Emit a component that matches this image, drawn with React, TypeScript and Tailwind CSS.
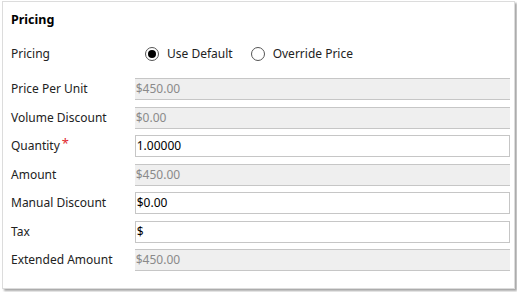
const rows: { label: string; value: string; readOnly: boolean; required?: boolean }[] = [
  { label: 'Price Per Unit', value: '$450.00', readOnly: true },
  { label: 'Volume Discount', value: '$0.00', readOnly: true },
  { label: 'Quantity', value: '1.00000', readOnly: false, required: true },
  { label: 'Amount', value: '$450.00', readOnly: true },
  { label: 'Manual Discount', value: '$0.00', readOnly: false },
  { label: 'Tax', value: '$', readOnly: false },
  { label: 'Extended Amount', value: '$450.00', readOnly: true },
];

function Radio({ checked, label }: { checked: boolean; label: string }) {
  return (
    <div className="flex items-center gap-[8px]">
      <span className="w-[14px] h-[14px] rounded-full border border-[#555] flex items-center justify-center bg-white">
        {checked && <span className="w-[8px] h-[8px] rounded-full bg-black" />}
      </span>
      <span>{label}</span>
    </div>
  );
}

export default function App() {
  return (
    <div className="w-[517px] h-[292px] bg-white pt-[1px] pl-[2px]" style={{ fontFamily: '"Noto Sans", "Open Sans", sans-serif' }}>
      <div className="w-[513px] h-[288px] border border-[#dcdcdc] bg-white shadow-[2px_2px_2px_rgba(0,0,0,0.35)] text-[12px] text-[#222] pl-[8px] pr-[4px]">
        <h2 className="font-bold text-[12.5px] text-black mt-[8px] h-[20px] leading-[20px]">Pricing</h2>

        <div className="flex items-center h-[24px] mt-[12px]">
          <div className="w-[124px]">Pricing</div>
          <div className="flex items-center gap-[18px] pl-[10px]">
            <Radio checked label="Use Default" />
            <Radio checked={false} label="Override Price" />
          </div>
        </div>

        <div className="flex flex-col mt-[9px]">
          {rows.map((r) => (
            <div key={r.label} className="flex items-center h-[28.5px]">
              <div className="w-[124px] flex items-start">
                {r.label}
                {r.required && <span className="text-[#e0282e] text-[13px] leading-[12px] ml-[2px]">*</span>}
              </div>
              <div
                className={`w-[376px] h-[22px] leading-[20px] border border-[#c6c6c6] px-[1px] text-[12px] ${
                  r.readOnly ? 'bg-[#efefef] text-[#8a8a8a] border-x-0' : 'bg-white text-black'
                }`}
              >
                {r.value}
              </div>
            </div>
          ))}
        </div>
      </div>
    </div>
  );
}
